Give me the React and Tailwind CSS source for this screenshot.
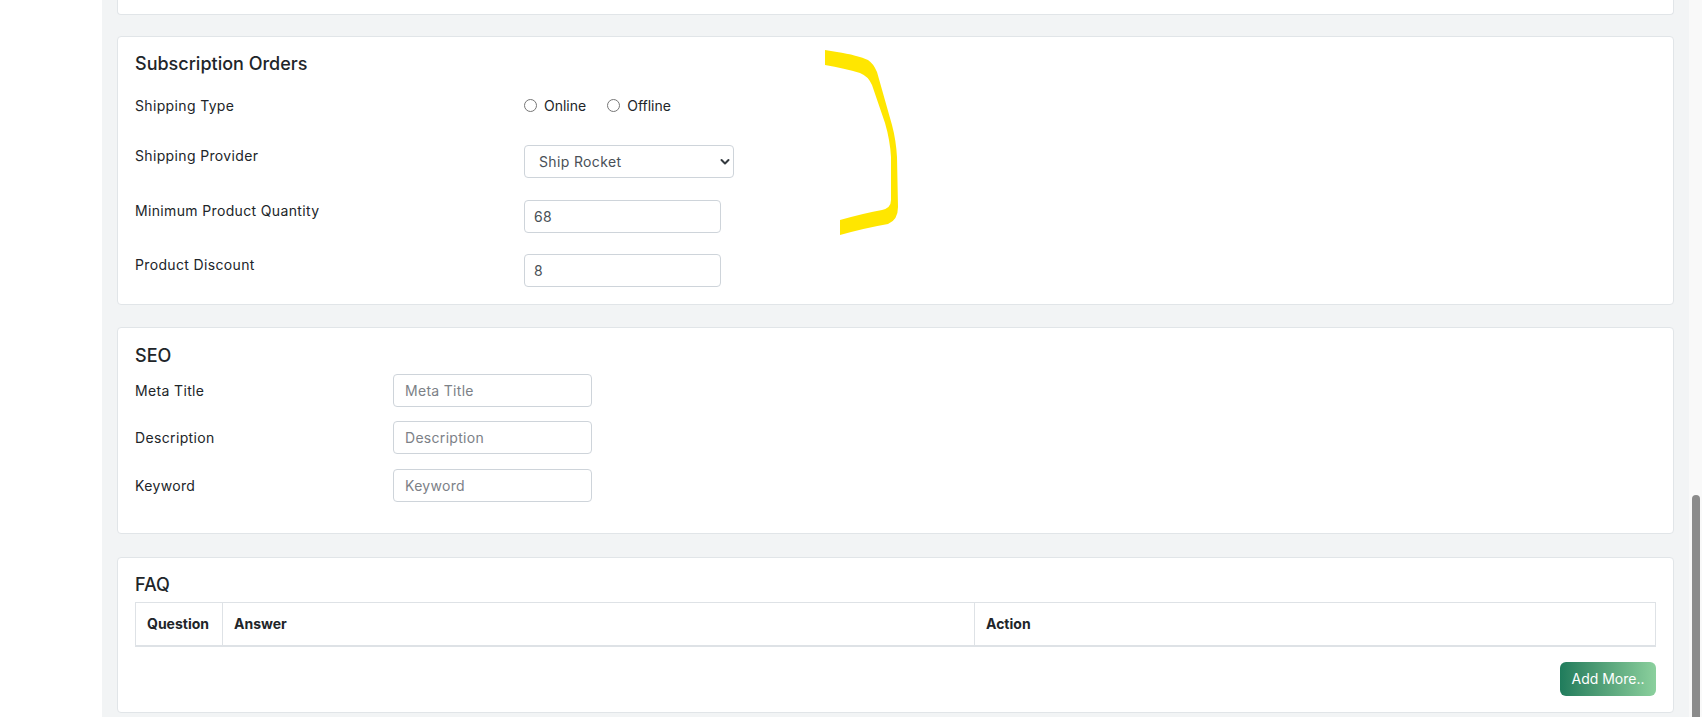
import React from "react";

function Card({ className = "", children }) {
  return (
    <section
      className={`rounded-[4px] border border-[#e1e5e8] bg-white px-[17px] ${className}`}
    >
      {children}
    </section>
  );
}

function Title({ children }) {
  return (
    <h2 className="text-[18px] leading-[27px] font-medium tracking-normal text-[#212529]">
      {children}
    </h2>
  );
}

function Radio({ label, name }) {
  return (
    <label className="flex items-center">
      <input
        type="radio"
        name={name}
        className="m-0 h-[13px] w-[13px] appearance-none rounded-full border border-[#767676] bg-white"
      />
      <span className="ml-[7px] leading-[21px] tracking-normal">{label}</span>
    </label>
  );
}

function TextInput({ value, placeholder, width }) {
  return (
    <input
      type="text"
      defaultValue={value}
      placeholder={placeholder}
      className={`${width} h-[33px] rounded-[4px] border border-[#ced4da] bg-white pl-[9px] text-[14px] text-[#495057] outline-none placeholder:text-[#7c8187]`}
    />
  );
}

function FormRow({ label, children, className = "" }) {
  return (
    <div className={`flex items-start ${className}`}>
      <div className="w-[389px] shrink-0 leading-[21px]">{label}</div>
      {children}
    </div>
  );
}

function SeoRow({ label, placeholder, className = "" }) {
  return (
    <div className={`flex items-center ${className}`}>
      <div className="w-[258px] shrink-0 leading-[21px]">{label}</div>
      <input
        type="text"
        placeholder={placeholder}
        className="h-[33px] w-[199px] rounded-[4px] border border-[#ced4da] bg-white pl-[11px] text-[14px] tracking-[0.3px] text-[#495057] outline-none placeholder:text-[#7c8187]"
      />
    </div>
  );
}

export default function App() {
  return (
    <div className="relative flex h-[717px] w-full overflow-hidden bg-white font-['Inter',sans-serif] text-[14px] tracking-[0.35px] text-[#212529]">
      <aside className="w-[102px] shrink-0 bg-white" />

      <main className="flex-1 bg-[#f2f4f5] px-[15px]">
        {/* tail of the card above */}
        <div className="h-[15px] rounded-b-[4px] border-x border-b border-[#e1e5e8] bg-white" />

        <Card className="mt-[21px] pt-[13px] pb-[17px]">
          <Title>Subscription Orders</Title>
          <div className="mt-[18px]">
            <FormRow label="Shipping Type">
              <div className="flex h-[21px] items-center">
                <Radio label="Online" name="shipping-type" />
                <div className="ml-[21px]">
                  <Radio label="Offline" name="shipping-type" />
                </div>
              </div>
            </FormRow>
            <FormRow label="Shipping Provider" className="mt-[29px]">
              <div className="relative">
                <select
                  defaultValue="shiprocket"
                  className="h-[33px] w-[210px] appearance-none rounded-[4px] border border-[#ced4da] bg-white pl-[14px] text-[14px] text-[#495057] outline-none"
                >
                  <option value="shiprocket">Ship Rocket</option>
                </select>
                <svg
                  className="pointer-events-none absolute right-[4px] top-[12px] h-[10px] w-[10px]"
                  viewBox="0 0 10 10"
                >
                  <path
                    d="M1.5 3 L5 6.5 L8.5 3"
                    fill="none"
                    stroke="#343a40"
                    strokeWidth="2"
                    strokeLinecap="round"
                    strokeLinejoin="round"
                  />
                </svg>
              </div>
            </FormRow>
            <FormRow label="Minimum Product Quantity" className="mt-[22px]">
              <TextInput value="68" width="w-[197px]" />
            </FormRow>
            <FormRow label="Product Discount" className="mt-[21px]">
              <TextInput value="8" width="w-[197px]" />
            </FormRow>
          </div>
        </Card>

        <Card className="mt-[22px] pt-[14px] pb-[31px]">
          <Title>SEO</Title>
          <SeoRow label="Meta Title" placeholder="Meta Title" className="mt-[5px]" />
          <SeoRow label="Description" placeholder="Description" className="mt-[14px]" />
          <SeoRow label="Keyword" placeholder="Keyword" className="mt-[15px]" />
        </Card>

        <Card className="mt-[23px] pt-[13px] pb-[16px]">
          <Title>FAQ</Title>
          <table className="mt-[4px] w-full table-fixed border-collapse">
            <colgroup>
              <col className="w-[87px]" />
              <col className="w-[752px]" />
              <col />
            </colgroup>
            <thead>
              <tr className="h-[43px]">
                <th className="border border-b-2 border-[#dee2e6] px-[11px] text-left font-bold tracking-normal">
                  Question
                </th>
                <th className="border border-b-2 border-[#dee2e6] px-[11px] text-left font-bold tracking-normal">
                  Answer
                </th>
                <th className="border border-b-2 border-[#dee2e6] px-[11px] text-left font-bold tracking-normal">
                  Action
                </th>
              </tr>
            </thead>
          </table>
          <div className="mt-[15px] flex justify-end">
            <button className="h-[34px] w-[96px] rounded-[6px] bg-linear-to-r from-[#1f7c5c] to-[#8bd09d] text-[14px] tracking-normal text-white">
              Add More..
            </button>
          </div>
        </Card>
      </main>

      {/* page scrollbar */}
      <div className="relative w-[13px] shrink-0 bg-[#f9f9f9]">
        <div className="absolute left-[3px] top-[495px] bottom-0 w-[8px] rounded-t-full bg-[#8b8b8b]" />
      </div>

      {/* highlighter mark */}
      <svg
        className="pointer-events-none absolute left-[820px] top-[45px] h-[195px] w-[85px]"
        viewBox="0 0 85 195"
      >
        <path
          d="M5 5 L17 7 C30 9 42 12 48 15 Q53 18 57 27 L72 80 Q76 95 77 112 L78 162 Q78 175 68 179 Q45 183 20 190 L20 175 Q45 168 62 165 Q71 163 71 155 L71 112 Q70 95 65 78 L52 40 Q48 31 40 28 C30 25 18 22 5 20 Z"
          fill="#ffe600"
        />
      </svg>
    </div>
  );
}
